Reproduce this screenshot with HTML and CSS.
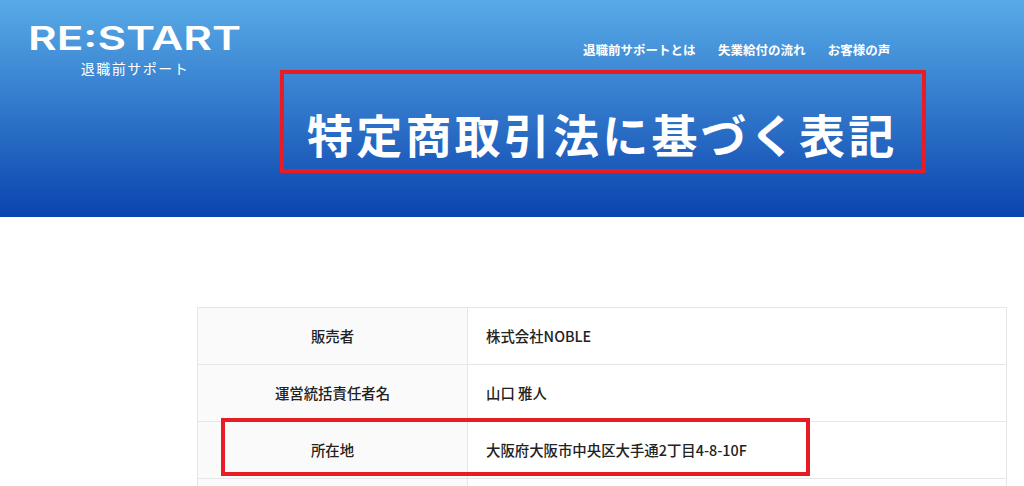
FILE: index.html
```html
<!DOCTYPE html>
<html lang="ja">
<head>
<meta charset="utf-8">
<title>特定商取引法に基づく表記</title>
<link rel="stylesheet" href="styles.css">
</head>
<body>
<header class="hero">
  <div class="hero-top">
    <a class="logo" href="#">
      <svg class="logo-mark" width="214" height="30" viewBox="0 0 214 30" role="img" aria-label="RE:START">
        <text x="0" y="24" textLength="213" lengthAdjust="spacingAndGlyphs">RE:START</text>
      </svg>
      <span class="logo-sub">退職前サポート</span>
    </a>
    <nav class="nav">
      <a href="#">退職前サポートとは</a>
      <a href="#">失業給付の流れ</a>
      <a href="#">お客様の声</a>
    </nav>
  </div>
  <h1 class="title">特定商取引法に基づく表記</h1>
  <div class="mark mark-title"></div>
</header>
<main class="main">
  <table class="info">
    <tr><th>販売者</th><td>株式会社NOBLE</td></tr>
    <tr><th>運営統括責任者名</th><td>山口 雅人</td></tr>
    <tr><th>所在地</th><td>大阪府大阪市中央区大手通2丁目4-8-10F</td></tr>
    <tr><th></th><td></td></tr>
  </table>
  <div class="mark mark-address"></div>
</main>
</body>
</html>
```
FILE: styles.css
```css
* { box-sizing: border-box; }
html, body { margin: 0; height: 486px; overflow: hidden; background: #fff; }
body { font-family: "Noto Sans CJK JP", "Noto Sans", sans-serif; color: #222; position: relative; }
a { color: inherit; text-decoration: none; }

.hero {
  height: 217px;
  background: linear-gradient(180deg, #58abe7 0%, #0a44ae 100%);
  color: #fff;
  padding: 26px 0 0 28px;
}
.hero-top { display: flex; align-items: flex-start; height: 65px; }
.logo { display: flex; flex-direction: column; align-items: center; width: 214px; }
.logo-mark { display: block; overflow: visible; }
.logo-mark text {
  font-family: "Inter", "Liberation Sans", sans-serif;
  font-size: 32px;
  font-weight: 600;
  fill: #fff;
}
.logo-sub { font-size: 14px; line-height: 16px; letter-spacing: 1.5px; margin-top: 4px; }
.nav { display: flex; gap: 22.4px; margin-left: 341px; margin-top: 14px; font-size: 12.5px; line-height: 20px; font-weight: 700; }
.title {
  margin: 11px 0 0 279px;
  font-size: 46px;
  line-height: 62px;
  font-weight: 700;
  letter-spacing: 3.2px;
}

.main { padding: 90px 17px 0 197px; }
.info { width: 810px; border-collapse: collapse; table-layout: fixed; font-size: 14.4px; }
.info th, .info td { height: 57px; border: 1px solid #e6e6e6; padding: 0 18px; line-height: 20px; }
.info th { width: 270px; background: #fafafa; font-weight: 500; text-align: center; }
.info td { font-weight: 500; text-align: left; }

.mark { position: absolute; border: 4px solid #e81c24; }
.mark-title { left: 280px; top: 70px; width: 646px; height: 103px; }
.mark-address { left: 221px; top: 418px; width: 589px; height: 58px; }
```
